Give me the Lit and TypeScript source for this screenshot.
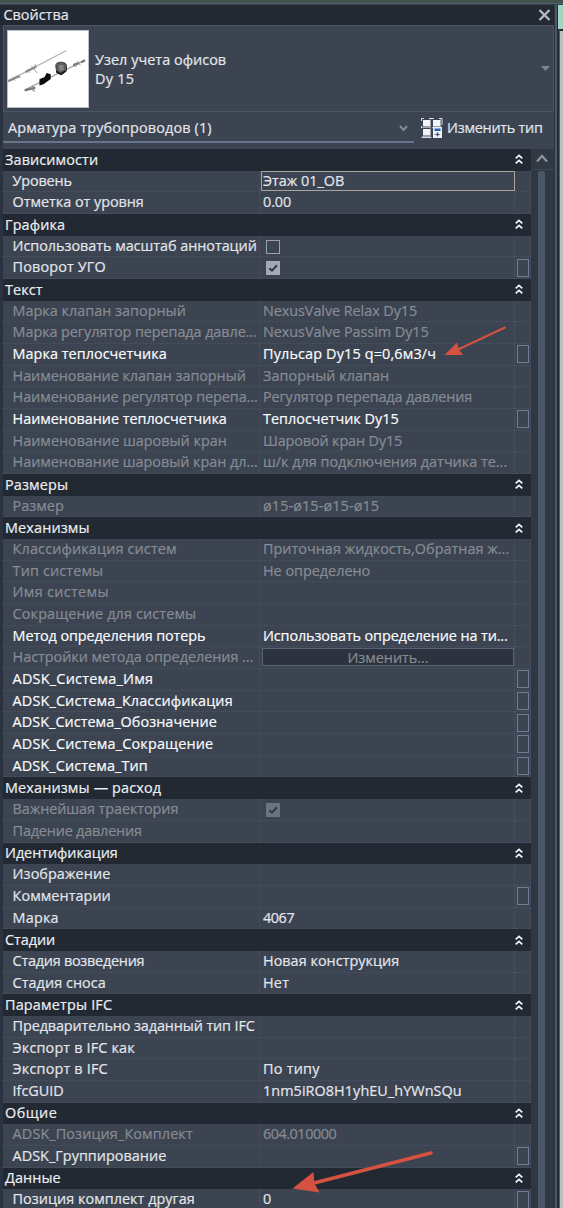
import { LitElement, html, css, svg, nothing } from "lit";
import { customElement, property } from "lit/decorators.js";

/** A line of text tracked so that it fills a given width. */
@customElement("fit-text")
class FitText extends LitElement {
  @property() text = "";
  @property({ type: Number }) span = 0;

  static styles = css`
    :host {
      display: inline-block;
      white-space: pre;
    }
  `;

  render() {
    return html`<span>${this.text}</span>`;
  }

  updated() {
    const el = this.renderRoot.querySelector("span") as HTMLElement;
    el.style.letterSpacing = "0px";
    const natural = el.getBoundingClientRect().width;
    if (natural > 0 && this.text.length > 1) {
      el.style.letterSpacing = `${(this.span + 1.2 - natural) / this.text.length}px`;
    }
  }
}

type Txt = [string, number];
interface Row {
  label: Txt;
  value?: Txt;
  dim?: boolean;
  strong?: boolean;
  box?: boolean;
  check?: "on" | "off";
  kind?: "input" | "button";
}
interface Group {
  title: Txt;
  rows: Row[];
}

const GROUPS: Group[] = [
  {
    title: ["Зависимости", 92],
    rows: [
      { label: ["Уровень", 58], value: ["Этаж 01_ОВ", 80], kind: "input" },
      { label: ["Отметка от уровня", 130], value: ["0.00", 27] },
    ],
  },
  {
    title: ["Графика", 59],
    rows: [
      { label: ["Использовать масштаб аннотаций", 243], check: "off" },
      { label: ["Поворот УГО", 92], check: "on", box: true },
    ],
  },
  {
    title: ["Текст", 36.5],
    rows: [
      { label: ["Марка клапан запорный", 172], value: ["NexusValve Relax Dy15", 153], dim: true },
      { label: ["Марка регулятор перепада давле...", 243], value: ["NexusValve Passim Dy15", 164.5], dim: true },
      { label: ["Марка теплосчетчика", 153], value: ["Пульсар Dy15 q=0,6м3/ч", 172], box: true, strong: true },
      { label: ["Наименование клапан запорный", 232], value: ["Запорный клапан", 125], dim: true },
      { label: ["Наименование регулятор перепа...", 244], value: ["Регулятор перепада давления", 208], dim: true },
      { label: ["Наименование теплосчетчика", 213], value: ["Теплосчетчик Dy15", 134.5], box: true, strong: true },
      { label: ["Наименование шаровый кран", 213], value: ["Шаровой кран Dy15", 138], dim: true },
      { label: ["Наименование шаровый кран дл...", 244], value: ["ш/к для подключения датчика те...", 243], dim: true },
    ],
  },
  {
    title: ["Размеры", 62],
    rows: [{ label: ["Размер", 50], value: ["ø15-ø15-ø15-ø15", 115], dim: true }],
  },
  {
    title: ["Механизмы", 83.5],
    rows: [
      { label: ["Классификация систем", 163], value: ["Приточная жидкость,Обратная ж...", 245], dim: true },
      { label: ["Тип системы", 89.5], value: ["Не определено", 106], dim: true },
      { label: ["Имя системы", 95], dim: true },
      { label: ["Сокращение для системы", 182.5], dim: true },
      { label: ["Метод определения потерь", 191.5], value: ["Использовать определение на ти...", 243.5], strong: true },
      { label: ["Настройки метода определения ...", 239.5], value: ["Изменить...", 80], kind: "button", dim: true },
      { label: ["ADSK_Система_Имя", 139.5], box: true, strong: true },
      { label: ["ADSK_Система_Классификация", 219], box: true, strong: true },
      { label: ["ADSK_Система_Обозначение", 203], box: true, strong: true },
      { label: ["ADSK_Система_Сокращение", 199.5], box: true, strong: true },
      { label: ["ADSK_Система_Тип", 134], box: true, strong: true },
    ],
  },
  {
    title: ["Механизмы — расход", 155],
    rows: [
      { label: ["Важнейшая траектория", 164.5], check: "on", dim: true },
      { label: ["Падение давления", 128], dim: true },
    ],
  },
  {
    title: ["Идентификация", 111.5],
    rows: [
      { label: ["Изображение", 96.5] },
      { label: ["Комментарии", 97], box: true },
      { label: ["Марка", 45], value: ["4067", 30] },
    ],
  },
  {
    title: ["Стадии", 49],
    rows: [
      { label: ["Стадия возведения", 130.5], value: ["Новая конструкция", 135] },
      { label: ["Стадия сноса", 92], value: ["Нет", 25] },
    ],
  },
  {
    title: ["Параметры IFC", 106],
    rows: [
      { label: ["Предварительно заданный тип IFC", 241] },
      { label: ["Экспорт в IFC как", 121] },
      { label: ["Экспорт в IFC", 94], value: ["По типу", 55.5] },
      { label: ["IfcGUID", 50], value: ["1nm5iRO8H1yhEU_hYWnSQu", 197.5] },
    ],
  },
  {
    title: ["Общие", 51],
    rows: [
      { label: ["ADSK_Позиция_Комплект", 179], value: ["604.010000", 72], dim: true },
      { label: ["ADSK_Группирование", 152.5], box: true },
    ],
  },
  {
    title: ["Данные", 54.5],
    rows: [{ label: ["Позиция комплект другая", 181], value: ["0", 7.5], box: true }],
  },
];

const fit = (t: Txt) => html`<fit-text .text=${t[0]} .span=${t[1]}></fit-text>`;

@customElement("app-root")
class AppRoot extends LitElement {
  static styles = css`
    :host {
      display: block;
      position: relative;
      width: 563px;
      height: 1208px;
      overflow: hidden;
      background: #2b323d;
      color: #e3e6ea;
      font: 14.4px/20px "Open Sans", "Noto Sans", sans-serif;
      -webkit-text-stroke: 0.2px currentColor;
    }
    * { box-sizing: border-box; }
    svg { display: block; }
    .window {
      display: grid;
      grid-template-columns: 3px 551px 9px;
      grid-template-rows: 5px 1203px;
    }
    .topline {
      grid-column: 1 / -1;
      background: linear-gradient(#45534f 0 3px, #505f70 3px 4px, #3a4553 4px);
    }
    .leftline { background: #2c3340; }
    .panel {
      display: flex;
      flex-direction: column;
      background: #3c4452;
      min-width: 0;
    }
    .title {
      height: 20px;
      flex: none;
      display: flex;
      justify-content: space-between;
      background: #222933;
      margin-left: -3px;
      padding: 0 3px 0 3.500px;
    }
    .close { margin-top: 4px; }
    .type {
      height: 87px;
      flex: none;
      display: flex;
      align-items: center;
      border: 1px solid #4a5464;
      padding: 0 3px 0 3px;
    }
    .preview {
      width: 82px;
      height: 78px;
      background: #fff;
      border: 1px solid #b9c0ca;
    }
    .names {
      flex: 1;
      padding: 1px 0 0 6px;
      display: grid;
      line-height: 19px;
    }
    .filter {
      height: 37px;
      flex: none;
      display: flex;
    }
    .combo {
      width: 411px;
      height: 31px;
      border-bottom: 2px solid #66748a;
      display: flex;
      justify-content: space-between;
      padding: 6px 6px 0 5px;
    }
    .combo svg { margin-top: 7px; }
    .edit {
      display: flex;
      padding: 6px 0 0 7px;
      gap: 4px;
    }
    .body {
      display: flex;
      flex: 1;
      min-height: 0;
      overflow: hidden;
    }
    .list { width: 528px; flex: none; }
    .head {
      height: 21.68px;
      background: #222933;
      padding: 0 8px 0 2px;
      display: flex;
      justify-content: space-between;
      align-items: center;
      color: #eceef1;
    }
    .row {
      height: 21.68px;
      display: grid;
      grid-template-columns: 257px 255px 16px;
    }
    .cell {
      border-right: 1px dotted #495363;
      border-bottom: 1px dotted #495363;
      display: flex;
      align-items: flex-start;
      white-space: nowrap;
      overflow: hidden;
      line-height: 19px;
    }
    .name { padding-left: 9.600px; }
    .value { padding-left: 3px; }
    .dim { color: #878c94; }
    .strong { color: #fafbfc; }
    .cell.input {
      border: 1.500px solid #aaa59c;
      margin: 0 0 1px 1px;
      padding-left: 1px;
      line-height: 17px;
    }
    .button {
      margin: 1px 0 0 -1px;
      width: 252px;
      height: 18px;
      border: 1px solid #566275;
      background: #2c323e;
      text-align: center;
      line-height: 17px;
    }
    .check {
      width: 14px;
      height: 14px;
      margin: 4px 0 0 2.500px;
      border: 1px solid #9ba2ae;
    }
    .check.on { background: #a3a9b5; border-color: #a3a9b5; }
    .dim .check.on { background: #6c7380; border-color: #6c7380; }
    .box {
      width: 12px;
      height: 18px;
      margin: 1.300px 0 0 2px;
      border: 1px solid #6d7d94;
    }
    .scroll {
      flex: 1;
      background: #2f3743;
      display: flex;
      flex-direction: column;
      align-items: center;
    }
    .up {
      width: 100%;
      height: 21px;
      border-bottom: 1px solid #3d4756;
      padding: 5px 0 0 5px;
      background: #303844;
    }
    .thumb {
      width: 7px;
      flex: 1;
      margin: 1px 2px 0 0;
      background: #4a5768;
      border-radius: 3px 3px 0 0;
    }
    .edge {
      display: grid;
      grid-template-columns: 1px 2px 2px 4px;
      grid-template-rows: 24px 1fr;
    }
    .edge .a { background: #2b323d; grid-row: 1 / 3; }
    .edge .b { background: #4c596a; grid-row: 1 / 3; }
    .edge .c { background: #222a35; grid-row: 1 / 3; }
    .edge .tab { background: #a2d5bd; margin-left: -1px; }
    .edge .page { background: #bdbebe; border-top: 2px solid #23282e; border-left: 1px solid #5a5d60; }
    .marks {
      position: absolute;
      left: 0;
      top: 0;
      pointer-events: none;
    }
  `;

  private collapse = () => html`<svg width="8" height="11" viewBox="0 0 8 11" fill="none" stroke="#f4f5f7" stroke-width="1.7">
    <path d="M.7 4.4 4 1.3l3.3 3.1M.7 9.4 4 6.3l3.3 3.1" />
  </svg>`;

  private row(r: Row) {
    const tone = r.dim ? "dim" : r.strong ? "strong" : "";
    return html`<div class="row ${tone}">
      <div class="cell name">${fit(r.label)}</div>
      <div class="cell value ${r.kind === "input" ? "input" : ""}">
        ${r.kind === "button"
          ? html`<div class="button">${fit(r.value!)}</div>`
          : r.value
            ? fit(r.value)
            : nothing}
        ${r.check
          ? html`<div class="check ${r.check}">
              ${r.check === "on"
                ? html`<svg width="12" height="12" fill="none" stroke="#303844" stroke-width="2"><path d="M2.3 6.2 5 8.7 10 3.3" /></svg>`
                : nothing}
            </div>`
          : nothing}
      </div>
      <div class="cell">${r.box ? html`<div class="box"></div>` : nothing}</div>
    </div>`;
  }

  private preview() {
    return html`<svg class="preview" viewBox="0 0 82 78" fill="none">
      <path d="M1 51 60 20" stroke="#b4b4b4" stroke-width="1.4" />
      <path d="M18 60 79 30" stroke="#999" stroke-width="1.1" />
      <path d="M0 51.500 12 46M18 42l11-5.500" stroke="#8a8a8a" stroke-width="2.400" />
      <path d="M5 47l2 4M10 45l3 3M20 39l2 4M24 36l6 7M28 34l-1 6" stroke="#999" />
      <path d="M17 61l11-3M67 35.500l5-2.500M75 32l4-2" stroke="#777" stroke-width="2.400" />
      <path d="M22 58l5 4M25 56l2 6M68 33l2 4M72 31l2 4" stroke="#888" />
      <path d="M33 50l5-2 2-4 3 1v4l-7 5-3 1z" fill="#0c0c0c" stroke="#0c0c0c" stroke-width="1.500" />
      <path d="M49 36q0-4 5-4 6 0 6 4v5l-5 4-5-2z" fill="#5c5c5c" stroke="#3c3c3c" />
      <path d="M52 35h5v5l-4 1z" fill="#858585" />
      <path d="M49.500 41.500 54 44l5-3" stroke="#151515" stroke-width="1.600" />
    </svg>`;
  }

  private typeIcon() {
    const tile = (x: number, y: number) => svg`<rect x=${x} y=${y} width="7" height="6.5" fill="#f3f4f6" />
      <path d="M${x - 1} ${y + 7.5}h8.500v-8" stroke="#9ea5af" fill="none" />`;
    return html`<svg width="22" height="20" viewBox="0 0 22 20">
      <path d="M.5 3V.5H3M8 .5h5M18 .5h3V7M.5 8v2M.5 19.500h10" stroke="#d9dce0" fill="none" />
      ${tile(2, 2)} ${tile(12, 2)} ${tile(2, 11)}
      <rect x="12" y="9" width="9" height="11" fill="#eef0f3" />
      <rect x="13.500" y="10.500" width="6" height="2.500" fill="#2464b8" />
      <path d="M13.500 16.500h5.500M16.500 14v4.500" stroke="#7b828d" />
      <rect x="15.500" y="15.500" width="2" height="2" fill="#3a424f" />
    </svg>`;
  }

  render() {
    return html`
      <div class="window">
        <div class="topline"></div>
        <div class="leftline"></div>
        <div class="panel">
          <div class="title">
            ${fit(["Свойства", 64])}
            <svg class="close" width="13" height="12" fill="none" stroke="#b9bdc4" stroke-width="2.200"><path d="M1.500 1l10 10M11.500 1l-10 10" /></svg>
          </div>
          <div class="type">
            ${this.preview()}
            <div class="names">${fit(["Узел учета офисов", 130])}${fit(["Dy 15", 38])}</div>
            <svg width="9" height="5" fill="#77859a"><path d="M0 0h9L4.500 5z" /></svg>
          </div>
          <div class="filter">
            <div class="combo">
              ${fit(["Арматура трубопроводов (1)", 202.5])}
              <svg width="9" height="7" fill="none" stroke="#7b8ba2" stroke-width="2"><path d="M1 1l3.500 4L8 1" /></svg>
            </div>
            <div class="edit">${this.typeIcon()}${fit(["Изменить тип", 94.5])}</div>
          </div>
          <div class="body">
            <div class="list">
              ${GROUPS.map(
                (g) => html`<div class="head">${fit(g.title)}${this.collapse()}</div>
                  ${g.rows.map((r) => this.row(r))}`
              )}
            </div>
            <div class="scroll">
              <div class="up">
                <svg width="12" height="9" fill="none" stroke="#8e959f" stroke-width="2.200"><path d="M1 7.500 6 2l5 5.500" /></svg>
              </div>
              <div class="thumb"></div>
            </div>
          </div>
        </div>
        <div class="edge">
          <div class="a"></div><div class="b"></div><div class="c"></div>
          <div class="tab"></div><div class="page"></div>
        </div>
      </div>
      <svg class="marks" width="563" height="1208" fill="#d4523f" stroke="#d4523f" stroke-linecap="round">
        <path d="M505 327.500 457 350" stroke-width="2" />
        <path d="M444.500 355 457 342.500l2 7 4 5.500z" stroke="none" />
        <path d="M431 1153 312 1183.500" stroke-width="3.500" />
        <path d="M292.500 1188.500 313.500 1172l1 11.500 5 9z" stroke="none" />
      </svg>
    `;
  }
}
